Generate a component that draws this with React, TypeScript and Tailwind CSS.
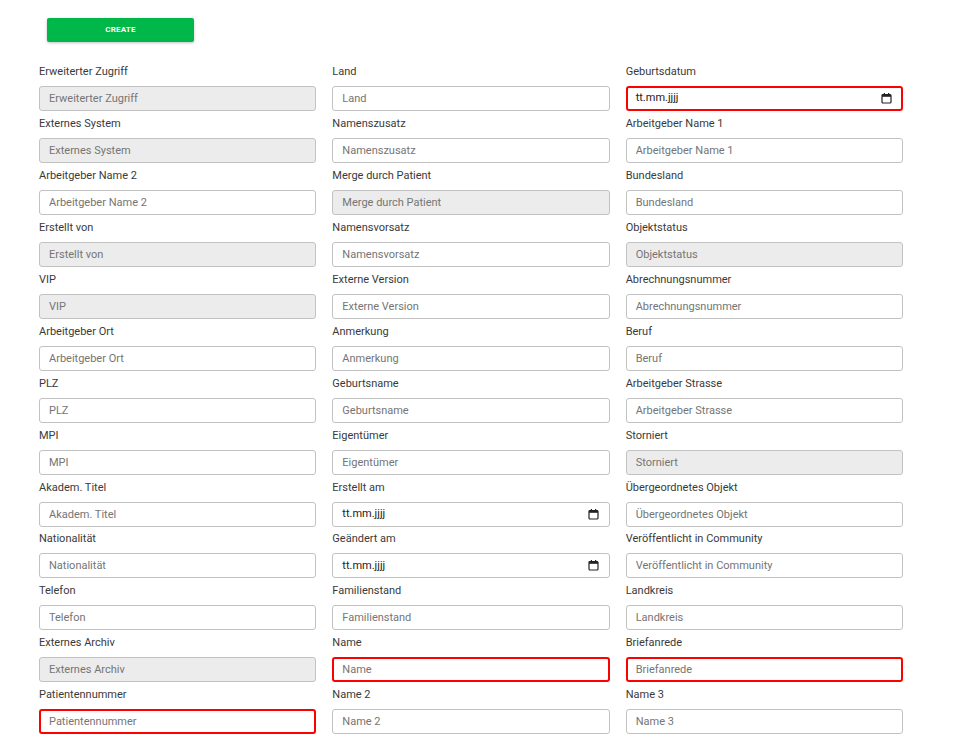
import React from "react";

type Field = {
  label: string;
  kind?: "text" | "date";
  disabled?: boolean;
  error?: boolean;
};

const FIELDS: Field[] = [
  { label: "Erweiterter Zugriff", disabled: true },
  { label: "Land" },
  { label: "Geburtsdatum", kind: "date", error: true },
  { label: "Externes System", disabled: true },
  { label: "Namenszusatz" },
  { label: "Arbeitgeber Name 1" },
  { label: "Arbeitgeber Name 2" },
  { label: "Merge durch Patient", disabled: true },
  { label: "Bundesland" },
  { label: "Erstellt von", disabled: true },
  { label: "Namensvorsatz" },
  { label: "Objektstatus", disabled: true },
  { label: "VIP", disabled: true },
  { label: "Externe Version" },
  { label: "Abrechnungsnummer" },
  { label: "Arbeitgeber Ort" },
  { label: "Anmerkung" },
  { label: "Beruf" },
  { label: "PLZ" },
  { label: "Geburtsname" },
  { label: "Arbeitgeber Strasse" },
  { label: "MPI" },
  { label: "Eigentümer" },
  { label: "Storniert", disabled: true },
  { label: "Akadem. Titel" },
  { label: "Erstellt am", kind: "date" },
  { label: "Übergeordnetes Objekt" },
  { label: "Nationalität" },
  { label: "Geändert am", kind: "date" },
  { label: "Veröffentlicht in Community" },
  { label: "Telefon" },
  { label: "Familienstand" },
  { label: "Landkreis" },
  { label: "Externes Archiv", disabled: true },
  { label: "Name", error: true },
  { label: "Briefanrede", error: true },
  { label: "Patientennummer", error: true },
  { label: "Name 2" },
  { label: "Name 3" },
];

function CalendarIcon() {
  return (
    <svg width="11" height="11" viewBox="0 0 11 11" className="shrink-0">
      <rect x="1" y="1.5" width="9" height="8.5" rx="1" fill="none" stroke="#222" strokeWidth="1.2" />
      <rect x="1" y="1.5" width="9" height="2.3" fill="#222" />
      <rect x="2.8" y="0" width="1.2" height="2" fill="#222" />
      <rect x="7" y="0" width="1.2" height="2" fill="#222" />
    </svg>
  );
}

function FormField({ field }: { field: Field }) {
  const border = field.error
    ? "border-2 border-[#ff0000] px-[8px]"
    : "border border-[#c2c2c2] px-[9px]";
  const bg = field.disabled ? "bg-[#ececec]" : "bg-white";

  return (
    <div className="flex flex-col">
      <label className="h-[16px] text-[11px] leading-[16px] text-[#3a3a3a]">
        {field.label}
      </label>
      {field.kind === "date" ? (
        <div
          className={`mt-[6px] flex h-[25px] items-center justify-between rounded-[3px] ${border} ${bg} text-[11px] text-[#222]`}
        >
          <span>tt.mm.jjjj</span>
          <span className="mr-[1px]">
            <CalendarIcon />
          </span>
        </div>
      ) : (
        <input
          disabled={field.disabled}
          placeholder={field.label}
          className={`mt-[6px] h-[25px] w-full rounded-[3px] ${border} ${bg} text-[11px] text-[#333] outline-none placeholder:text-[#757575]`}
        />
      )}
    </div>
  );
}

export default function App() {
  return (
    <div className="min-h-screen bg-white font-['Roboto',sans-serif]">
      <div className="flex pl-[47px] pt-[18px]">
        <button className="h-[24px] w-[147px] rounded-[2px] bg-[#00b74a] text-[8px] font-bold tracking-[0.2px] text-white shadow-[0_1px_3px_rgba(0,0,0,0.25)]">
          CREATE
        </button>
      </div>
      <div className="ml-[39px] mt-[22px] grid w-[864px] grid-cols-3 gap-x-[16px] gap-y-[4.95px]">
        {FIELDS.map((f) => (
          <FormField key={f.label} field={f} />
        ))}
      </div>
    </div>
  );
}
